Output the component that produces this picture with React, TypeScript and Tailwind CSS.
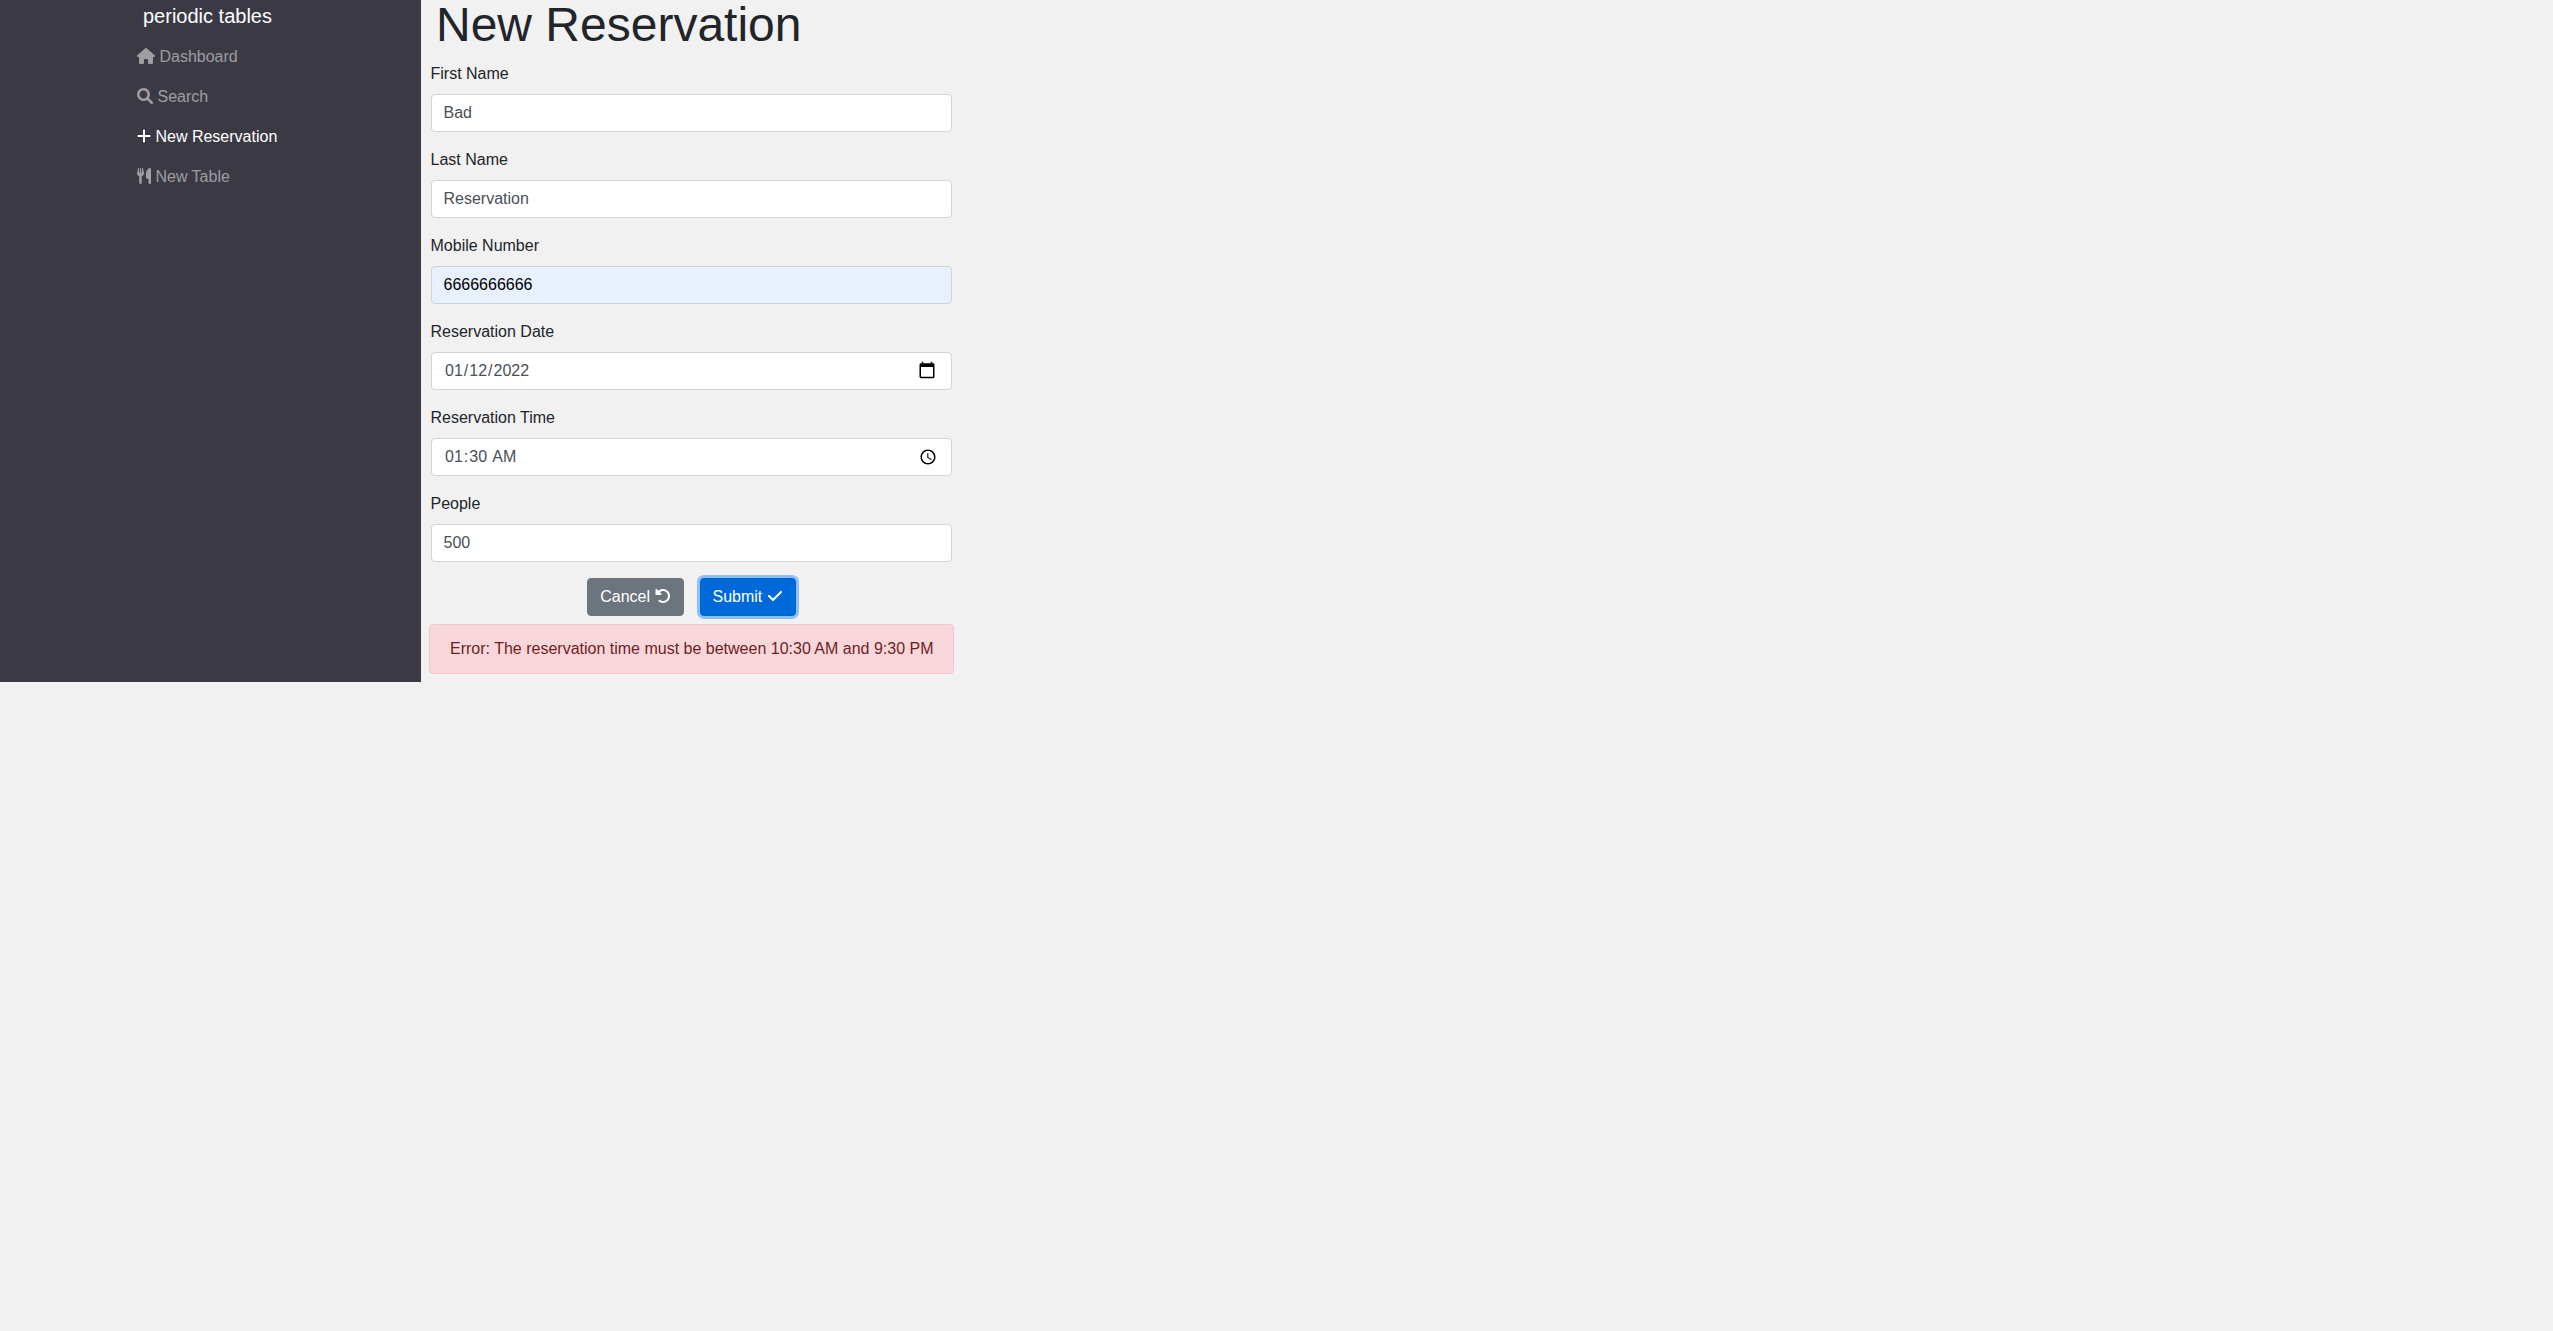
import type { InputHTMLAttributes, ReactNode } from "react";
import { FaHouse } from "react-icons/fa6";

function Glyph({ d, width = 512, className }: { d: string; width?: number; className: string }) {
  return (
    <svg viewBox={`0 0 ${width} 512`} fill="currentColor" className={`inline-block h-4 align-[-0.125em] ${className}`}>
      <path d={d} />
    </svg>
  );
}

const SEARCH =
  "M500.3 443.7l-119.7-119.7c27.22-40.41 40.65-90.9 33.46-144.7C401.8 87.79 326.8 13.32 235.2 1.723C99.01-15.51-15.51 99.01 1.724 235.2c11.6 91.64 86.08 166.7 177.6 178.9c53.8 7.189 104.3-6.236 144.7-33.46l119.7 119.7c15.62 15.62 40.95 15.62 56.57 0C515.9 484.7 515.9 459.3 500.3 443.7zM79.1 208c0-70.58 57.42-128 128-128s128 57.42 128 128c0 70.58-57.42 128-128 128S79.1 278.6 79.1 208z";
const PLUS =
  "M432 256c0 17.69-14.33 32.01-32 32.01H256v144c0 17.69-14.33 31.99-32 31.99s-32-14.3-32-31.99v-144H48c-17.67 0-32-14.32-32-32.01s14.33-31.99 32-31.99H192v-144c0-17.69 14.33-32.01 32-32.01s32 14.32 32 32.01v144h144C417.7 224 432 238.3 432 256z";
const UTENSILS =
  "M221.6 148.7C224.7 161.3 224.8 174.5 222.1 187.2C219.3 199.1 213.6 211.9 205.6 222.1C191.1 238.6 173 249.1 151.1 254.1V472C151.1 482.6 147.8 492.8 140.3 500.3C132.8 507.8 122.6 512 111.1 512C101.4 512 91.22 507.8 83.71 500.3C76.21 492.8 71.1 482.6 71.1 472V254.1C50.96 250.1 31.96 238.9 18.3 222.4C10.19 212.2 4.529 200.3 1.755 187.5C-1.019 174.7-.8315 161.5 2.303 148.8L32.51 12.45C33.36 8.598 35.61 5.197 38.82 2.9C42.02 .602 45.97-.4297 49.89 .0026C53.82 .4302 57.46 2.303 60.1 5.259C62.74 8.214 64.18 12.04 64.16 16V160H81.53L98.62 11.91C99.02 8.635 100.6 5.621 103.1 3.434C105.5 1.248 108.7 .0401 111.1 .0401C115.3 .0401 118.5 1.248 120.9 3.434C123.4 5.621 124.1 8.635 125.4 11.91L142.5 160H159.1V16C159.1 12.07 161.4 8.268 163.1 5.317C166.6 2.366 170.2 .474 174.1 .0026C178-.4262 181.1 .619 185.2 2.936C188.4 5.253 190.6 8.677 191.5 12.55L221.6 148.7zM448 472C448 482.6 443.8 492.8 436.3 500.3C428.8 507.8 418.6 512 408 512C397.4 512 387.2 507.8 379.7 500.3C372.2 492.8 368 482.6 368 472V352H351.2C342.8 352 334.4 350.3 326.6 347.1C318.9 343.8 311.8 339.1 305.8 333.1C299.9 327.1 295.2 320 291.1 312.2C288.8 304.4 287.2 296 287.2 287.6L287.1 173.8C288 136.9 299.1 100.8 319.8 70.28C340.5 39.71 369.8 16.05 404.1 2.339C408.1 .401 414.2-.3202 419.4 .2391C424.6 .7982 429.6 2.62 433.9 5.546C438.2 8.472 441.8 12.41 444.2 17.03C446.7 21.64 447.1 26.78 448 32V472z";
const UNDO =
  "M480 256c0 123.4-100.5 223.9-223.9 223.9c-48.84 0-95.17-15.58-134.2-44.86c-14.12-10.59-16.97-30.66-6.375-44.81c10.59-14.12 30.62-16.94 44.81-6.375c27.84 20.91 61 31.94 95.88 31.94C344.3 415.8 416 344.1 416 256s-71.69-159.8-159.8-159.8c-37.46 0-73.09 13.49-101.3 36.64l45.12 45.14c17.01 17.02 4.955 46.1-19.1 46.1H35.17C24.58 224.1 16 215.5 16 204.9V59.04c0-24.04 29.07-36.08 46.07-19.07l47.6 47.63C149.9 52.71 201.5 32.11 256.1 32.11C379.5 32.11 480 132.6 480 256z";
const CHECK =
  "M480 128c0 8.188-3.125 16.38-9.375 22.62l-256 256C208.4 412.9 200.2 416 192 416s-16.38-3.125-22.62-9.375l-128-128C35.13 272.4 32 264.2 32 256c0-18.28 14.95-32 32-32c8.188 0 16.38 3.125 22.62 9.375L192 338.8l233.4-233.4C431.6 99.13 439.8 96 448 96C465.1 96 480 109.7 480 128z";

function NavItem({ icon, label, active = false }: { icon: ReactNode; label: string; active?: boolean }) {
  return (
    <li>
      <a href="#" className={`block h-10 py-2 ${active ? "text-white" : "text-white/50"}`}>
        {icon} {label}
      </a>
    </li>
  );
}

type FieldProps = { label: string; icon?: ReactNode } & InputHTMLAttributes<HTMLInputElement>;

function Field({ label, icon, className = "bg-white text-[#495057]", ...input }: FieldProps) {
  return (
    <label className="mb-4 block">
      <span className="mb-2 block">{label}</span>
      <span className={`flex h-[38px] w-[521px] items-center rounded border border-[#ced4da] px-3 ${className}`}>
        <input
          {...input}
          className={`h-6 min-w-0 flex-1 bg-transparent [&::-webkit-calendar-picker-indicator]:hidden ${icon ? "pl-[0.5px]" : ""}`}
        />
        {icon}
      </span>
    </label>
  );
}

const calendar = (
  <svg viewBox="0 0 24 24" className="mr-[3px] mb-0.5 size-[18px] text-black" fill="currentColor">
    <path d="M20 3h-1V1h-2v2H7V1H5v2H4c-1.1 0-2 .9-2 2v16c0 1.1.9 2 2 2h16c1.1 0 2-.9 2-2V5c0-1.1-.9-2-2-2zm0 18H4V8h16v13z" />
  </svg>
);

const clock = (
  <svg viewBox="0 0 24 24" className="mr-0.5 mb-px size-[18px] text-black" fill="currentColor">
    <path d="M11.99 2C6.47 2 2 6.48 2 12s4.47 10 9.99 10C17.52 22 22 17.52 22 12S17.52 2 11.99 2zM12 20c-4.42 0-8-3.58-8-8s3.58-8 8-8 8 3.58 8 8-3.58 8-8 8zm.5-13H11v6l5.25 3.15.75-1.23-4.5-2.67z" />
  </svg>
);

export default function App() {
  return (
    <div className="min-h-screen bg-[#f1f1f1] font-['Liberation_Sans',Arial,sans-serif] text-base leading-6 text-[#212529]">
      <div className="flex h-[682px]">
        <nav className="w-[421px] bg-[#3b3a44] pl-[137px]">
          <div className="mb-1.5 pt-px pl-1.5 text-xl leading-[30px] text-white">periodic tables</div>
          <ul>
            <NavItem icon={<FaHouse className="inline-block h-4 w-[18px] align-[-0.125em]" />} label="Dashboard" />
            <NavItem icon={<Glyph d={SEARCH} className="w-4" />} label="Search" />
            <NavItem icon={<Glyph d={PLUS} width={448} className="w-3.5" />} label="New Reservation" active />
            <NavItem icon={<Glyph d={UTENSILS} width={448} className="w-3.5" />} label="New Table" />
          </ul>
        </nav>
        <main className="w-[533px] pl-2">
          <h1 className="mb-[13px] pt-px pl-[7px] text-5xl leading-none">New Reservation</h1>
          <form className="pl-[1.5px]">
            <Field label="First Name" type="text" defaultValue="Bad" />
            <Field label="Last Name" type="text" defaultValue="Reservation" />
            <Field label="Mobile Number" type="text" defaultValue="6666666666" className="bg-[#e8f0fe] text-black" />
            <Field label="Reservation Date" type="date" defaultValue="2022-01-12" icon={calendar} />
            <Field label="Reservation Time" type="time" defaultValue="01:30" icon={clock} />
            <Field label="People" type="text" defaultValue="500" />
            <div className="flex gap-4 pl-[156.75px]">
              <button type="button" className="h-[38px] rounded border border-[#6c757d] bg-[#6c757d] px-3 whitespace-nowrap text-white">
                Cancel <Glyph d={UNDO} className="w-4" />
              </button>
              <button type="button" className="h-[38px] rounded border border-[#0062cc] bg-[#0069d9] px-3 whitespace-nowrap text-white ring-3 ring-[#8dc0f8]">
                Submit <Glyph d={CHECK} className="w-4" />
              </button>
            </div>
          </form>
          <div className="mt-2 h-[50px] w-[525px] rounded border border-[#f5c6cb] bg-[#f8d7da] px-5 py-3 whitespace-nowrap text-[#721c24]">
            Error: The reservation time must be between 10:30 AM and 9:30 PM
          </div>
        </main>
      </div>
    </div>
  );
}
